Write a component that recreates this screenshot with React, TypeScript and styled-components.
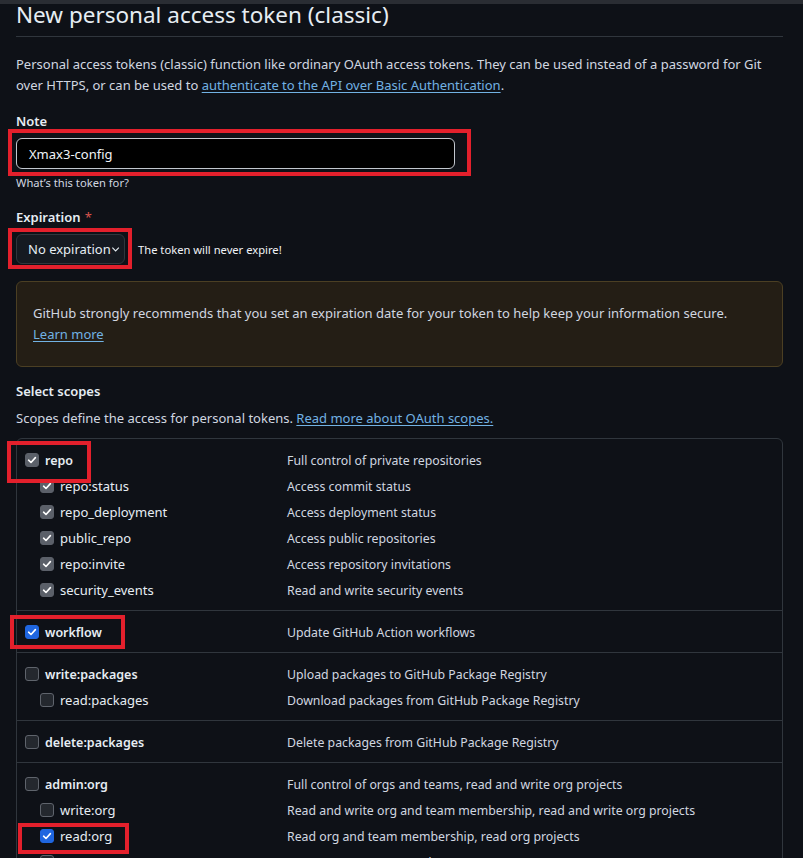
import React from "react";
import styled, { createGlobalStyle } from "styled-components";

const GlobalStyle = createGlobalStyle`
  html, body { margin: 0; padding: 0; background: #0e1117; }
  body {
    font-family: "Noto Sans", "Open Sans", sans-serif;
    color: #d8dde4;
    font-size: 13px;
  }
  * { box-sizing: border-box; }
`;

const Page = styled.div`
  position: relative;
  width: 803px;
  height: 858px;
  overflow: hidden;
  background: #0e1117;
`;

const TopStrip = styled.div`
  height: 4px;
  background: #2a2d33;
`;

const Content = styled.div`
  padding: 0 20px 0 16px;
`;

const Subhead = styled.div`
  border-bottom: 1px solid #30363d;
  padding-bottom: 7px;
`;

const Title = styled.h2`
  margin: -4px 0 0;
  font-size: 22.5px;
  font-weight: 400;
  line-height: 29px;
  color: #e6edf3;
`;

const Intro = styled.p`
  margin: 17px 0 0;
  line-height: 21px;
  color: #d1d7e0;
`;

const Link = styled.a`
  color: #72b2e3;
  text-decoration: underline;
  text-underline-offset: 2px;
  text-decoration-thickness: 1px;
`;

const FieldLabel = styled.div<{ $gap?: number }>`
  margin-top: ${(p) => p.$gap ?? 15}px;
  font-weight: 600;
  line-height: 21px;
  color: #e6edf3;
`;

const Required = styled.span`
  color: #d9544d;
  margin-left: 4px;
  font-weight: 400;
`;

const TextInput = styled.div`
  margin-top: 6px;
  width: 439px;
  height: 31px;
  border: 1px solid #c2c7ce;
  border-radius: 6px;
  background: #000;
  color: #f0f3f6;
  padding: 0 12px;
  display: flex;
  align-items: center;
`;

const Hint = styled.div`
  margin-top: 5px;
  font-size: 11.2px;
  line-height: 18px;
  color: #d1d7e0;
`;

const SelectRow = styled.div`
  margin-top: 6px;
  display: flex;
  align-items: center;
  gap: 13px;
`;

const Select = styled.div`
  width: 109px;
  height: 30px;
  border: 1px solid #30363d;
  border-radius: 6px;
  background: #151a21;
  color: #e6edf3;
  display: flex;
  align-items: center;
  justify-content: space-between;
  padding: 0 4px 0 11px;
  white-space: nowrap;
`;

const SelectNote = styled.span`
  font-size: 11.2px;
  color: #f0f3f6;
`;

const Warning = styled.div`
  margin-top: 17px;
  border: 1px solid #4b3f23;
  border-radius: 6px;
  background: #241e15;
  padding: 21px 16px;
  line-height: 21px;
  color: #d1d7e0;
`;

const SectionTitle = styled.div`
  margin-top: 14px;
  font-weight: 600;
  line-height: 21px;
  color: #e6edf3;
`;

const SectionNote = styled.div`
  margin-top: 6px;
  line-height: 21px;
  color: #d1d7e0;
`;

const ScopeTable = styled.div`
  margin-top: 9px;
  border: 1px solid #30363d;
  border-radius: 6px;
`;

const ScopeGroup = styled.div`
  padding: 8px 0 7px;
  & + & {
    border-top: 1px solid #30363d;
  }
`;

const ScopeRow = styled.div`
  display: grid;
  grid-template-columns: 270px 1fr;
  height: 26px;
  align-items: center;
`;

const ScopeName = styled.label<{ $child?: boolean }>`
  display: flex;
  align-items: center;
  gap: 6px;
  padding-left: ${(p) => (p.$child ? 23 : 8)}px;
  font-weight: ${(p) => (p.$child ? 400 : 600)};
  font-size: ${(p) => (p.$child ? 13 : 12.5)}px;
  color: #e6edf3;
`;

const ScopeDesc = styled.span`
  font-size: 12.3px;
  color: #d1d7e0;
`;

type BoxState = "gray" | "blue" | "empty";

const Box = styled.span<{ $state: BoxState }>`
  width: 14px;
  height: 14px;
  border-radius: 3px;
  display: inline-flex;
  align-items: center;
  justify-content: center;
  flex: none;
  background: ${(p) =>
    p.$state === "gray" ? "#5b6069" : p.$state === "blue" ? "#1f66e0" : "#24282e"};
  border: 1px solid
    ${(p) => (p.$state === "gray" ? "#5b6069" : p.$state === "blue" ? "#1f66e0" : "#5f646c")};
`;

const Mark = styled.div`
  position: absolute;
  border: 4px solid #e3202c;
  pointer-events: none;
`;

function Checkbox({ state }: { state: BoxState }) {
  return (
    <Box $state={state}>
      {state !== "empty" && (
        <svg width="10" height="10" viewBox="0 0 10 10">
          <path d="M1.6 5.2 L4 7.5 L8.4 2.6" fill="none" stroke="#fff" strokeWidth="1.6" strokeLinecap="round" strokeLinejoin="round" />
        </svg>
      )}
    </Box>
  );
}

type Scope = { name: string; desc: string; state: BoxState; child?: boolean };

const groups: Scope[][] = [
  [
    { name: "repo", desc: "Full control of private repositories", state: "gray" },
    { name: "repo:status", desc: "Access commit status", state: "gray", child: true },
    { name: "repo_deployment", desc: "Access deployment status", state: "gray", child: true },
    { name: "public_repo", desc: "Access public repositories", state: "gray", child: true },
    { name: "repo:invite", desc: "Access repository invitations", state: "gray", child: true },
    { name: "security_events", desc: "Read and write security events", state: "gray", child: true },
  ],
  [{ name: "workflow", desc: "Update GitHub Action workflows", state: "blue" }],
  [
    { name: "write:packages", desc: "Upload packages to GitHub Package Registry", state: "empty" },
    { name: "read:packages", desc: "Download packages from GitHub Package Registry", state: "empty", child: true },
  ],
  [{ name: "delete:packages", desc: "Delete packages from GitHub Package Registry", state: "empty" }],
  [
    { name: "admin:org", desc: "Full control of orgs and teams, read and write org projects", state: "empty" },
    { name: "write:org", desc: "Read and write org and team membership, read and write org projects", state: "empty", child: true },
    { name: "read:org", desc: "Read org and team membership, read org projects", state: "blue", child: true },
    { name: "manage_runners:org", desc: "Manage org runners and runner groups", state: "empty", child: true },
  ],
];

const marks = [
  { x: 8, y: 129, w: 463, h: 47 },
  { x: 8, y: 228, w: 124, h: 41 },
  { x: 7, y: 441, w: 84, h: 42 },
  { x: 10, y: 615, w: 115, h: 34 },
  { x: 18, y: 823, w: 111, h: 31 },
];

export default function App() {
  return (
    <>
      <GlobalStyle />
      <Page>
        <TopStrip />
        <Content>
          <Subhead>
            <Title>New personal access token (classic)</Title>
          </Subhead>
          <Intro>
            Personal access tokens (classic) function like ordinary OAuth access tokens. They can be used instead of a password for Git
            over HTTPS, or can be used to <Link>authenticate to the API over Basic Authentication</Link>.
          </Intro>
          <FieldLabel>Note</FieldLabel>
          <TextInput>Xmax3-config</TextInput>
          <Hint>What’s this token for?</Hint>
          <FieldLabel $gap={15}>
            Expiration<Required>*</Required>
          </FieldLabel>
          <SelectRow>
            <Select>
              No expiration
              <svg width="10" height="10" viewBox="0 0 10 10">
                <path d="M1.5 3.5 L5 7 L8.5 3.5" fill="none" stroke="#e6edf3" strokeWidth="1.2" />
              </svg>
            </Select>
            <SelectNote>The token will never expire!</SelectNote>
          </SelectRow>
          <Warning>
            GitHub strongly recommends that you set an expiration date for your token to help keep your information secure.
            <br />
            <Link>Learn more</Link>
          </Warning>
          <SectionTitle>Select scopes</SectionTitle>
          <SectionNote>
            Scopes define the access for personal tokens. <Link>Read more about OAuth scopes.</Link>
          </SectionNote>
          <ScopeTable>
            {groups.map((g, i) => (
              <ScopeGroup key={i}>
                {g.map((s) => (
                  <ScopeRow key={s.name}>
                    <ScopeName $child={s.child}>
                      <Checkbox state={s.state} />
                      {s.name}
                    </ScopeName>
                    <ScopeDesc>{s.desc}</ScopeDesc>
                  </ScopeRow>
                ))}
              </ScopeGroup>
            ))}
          </ScopeTable>
        </Content>
        {marks.map((m, i) => (
          <Mark key={i} style={{ left: m.x, top: m.y, width: m.w, height: m.h }} />
        ))}
      </Page>
    </>
  );
}
